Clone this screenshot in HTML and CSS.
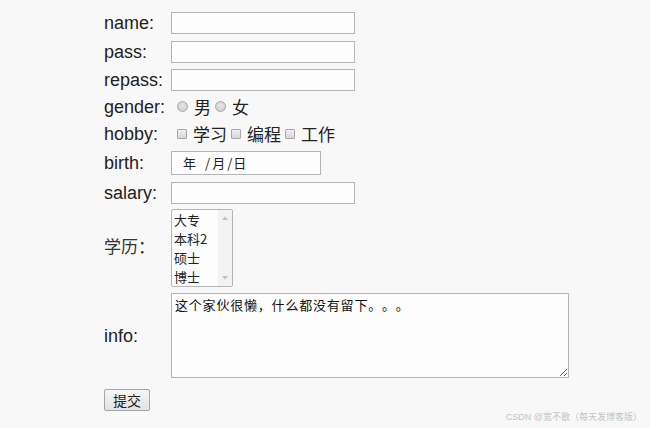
FILE: index.html
```html
<!DOCTYPE html>
<html lang="zh-CN">
<head>
  <meta charset="UTF-8">
  <meta name="viewport" content="width=device-width, initial-scale=1.0">
  <title>注册</title>
  <link rel="stylesheet" href="styles.css">
</head>
<body>
  <form class="reg-form" onsubmit="return false">
    <label class="lbl" for="name">name:</label>
    <div class="field"><input class="txt" type="text" id="name" name="name"></div>

    <label class="lbl" for="pass">pass:</label>
    <div class="field"><input class="txt" type="password" id="pass" name="pass"></div>

    <label class="lbl" for="repass">repass:</label>
    <div class="field"><input class="txt" type="password" id="repass" name="repass"></div>

    <span class="lbl">gender:</span>
    <div class="field choices">
      <label><input class="radio" type="radio" name="gender" value="m">男</label>
      <label><input class="radio" type="radio" name="gender" value="f">女</label>
    </div>

    <span class="lbl">hobby:</span>
    <div class="field choices">
      <label><input class="check" type="checkbox" name="hobby" value="study">学习</label>
      <label><input class="check" type="checkbox" name="hobby" value="code">编程</label>
      <label><input class="check" type="checkbox" name="hobby" value="work">工作</label>
    </div>

    <span class="lbl">birth:</span>
    <div class="field">
      <div class="date-box"><span class="y">年</span><span class="s1">/</span><span class="m">月</span><span class="s2">/</span><span>日</span></div>
    </div>

    <label class="lbl" for="salary">salary:</label>
    <div class="field"><input class="txt" type="text" id="salary" name="salary"></div>

    <label class="lbl lbl-cn" for="edu">学历：</label>
    <div class="field">
      <div class="edu-wrap">
        <select class="edu" id="edu" name="edu" size="4">
          <option>大专</option>
          <option>本科2</option>
          <option>硕士</option>
          <option>博士</option>
        </select>
        <!-- disabled scrollbar look -->
        <span class="edu-bar">
          <svg width="14" height="76" viewBox="0 0 14 76">
            <path d="M4 10 L7 6.5 L10 10 Z" fill="#c2c2c2"/>
            <path d="M4 66 L7 69.5 L10 66 Z" fill="#c2c2c2"/>
          </svg>
        </span>
      </div>
    </div>

    <label class="lbl" for="info">info:</label>
    <div class="field">
      <textarea class="info" id="info" name="info">这个家伙很懒，什么都没有留下。。。</textarea>
    </div>

    <div class="submit-row"><button class="submit-btn" type="submit">提交</button></div>
  </form>

  <div class="watermark">CSDN @宽不散（每天发博客版）</div>
</body>
</html>
```

FILE: styles.css
```css
body {
  margin: 0;
  padding: 8px 0 0 104px;
  min-height: 100vh;
  box-sizing: border-box;
  background-color: #f8f8f8;
  color: #222;
  font-family: "Liberation Sans", "Noto Sans CJK SC", sans-serif;
  font-size: 18px;
}

.reg-form {
  display: grid;
  grid-template-columns: 67px auto;
  grid-template-rows: 29px 29px 28px 25px 29px 29px 32px 78px 97px 32px;
  align-items: center;
  justify-content: start;
}

.lbl {
  line-height: 20px;
}

.lbl-cn {
  color: #333;
  font-size: 17px;
}

.field {
  display: flex;
  align-items: center;
}

.txt {
  width: 184px;
  height: 22px;
  box-sizing: border-box;
  margin: 0;
  padding: 1px 3px;
  border: 1px solid #b5b5b5;
  background-color: #fdfdfd;
  font-size: 14px;
}

.choices {
  gap: 4px;
  padding-left: 6px;
  font-size: 17px;
}

.choices label {
  display: flex;
  align-items: center;
}

.radio,
.check {
  appearance: none;
  -webkit-appearance: none;
  width: 11px;
  height: 11px;
  margin: 0 6px 0 0;
  border: 1px solid #a8a8a8;
  background: linear-gradient(#f0f0f0, #d6d6d6);
  box-sizing: border-box;
}

.radio {
  border-radius: 50%;
  background: radial-gradient(circle at 50% 40%, #e6e6e6, #c9c9c9);
}

.check {
  width: 10px;
  height: 10px;
  border-radius: 1px;
}

.date-box {
  display: flex;
  align-items: center;
  width: 150px;
  height: 24px;
  box-sizing: border-box;
  padding-left: 11px;
  border: 1px solid #b5b5b5;
  background-color: #fdfdfd;
  font-family: "Noto Sans CJK SC", sans-serif;
  font-size: 13px;
}

.date-box .y {
  margin-right: 9px;
}

.date-box .s1,
.date-box .m {
  margin-right: 2px;
}

.date-box .s2 {
  margin-right: 1px;
}

.edu-wrap {
  position: relative;
  width: 62px;
  height: 78px;
}

.edu {
  width: 62px;
  height: 78px;
  box-sizing: border-box;
  margin: 0;
  padding: 0 0 0 2px;
  border: 1px solid #b5b5b5;
  background-color: #fdfdfd;
  color: #222;
  font-family: "Noto Sans CJK SC", sans-serif;
  font-size: 13px;
}

.edu option {
  padding: 0;
  height: 19px;
  line-height: 19px;
}

.edu-bar {
  position: absolute;
  top: 1px;
  right: 1px;
  width: 14px;
  height: 76px;
  background-color: #f3f3f3;
}

.edu-bar svg {
  display: block;
}

.info {
  width: 398px;
  height: 85px;
  box-sizing: border-box;
  margin: 0;
  padding: 2px 3px;
  border: 1px solid #b5b5b5;
  background-color: #fdfdfd;
  color: #111;
  font-family: "Noto Sans CJK SC", sans-serif;
  font-size: 13px;
  letter-spacing: 0.8px;
  line-height: 18px;
  text-spacing-trim: space-all;
  font-feature-settings: "chws" 0, "halt" 0;
  resize: both;
}

.submit-row {
  grid-column: 1 / 3;
}

.submit-btn {
  width: 46px;
  height: 22px;
  padding: 0;
  border: 1px solid #a5a5a5;
  border-radius: 2px;
  background: linear-gradient(#f6f6f6, #e2e2e2);
  color: #222;
  font-family: "Noto Sans CJK SC", sans-serif;
  font-size: 14px;
  cursor: pointer;
}

.watermark {
  position: absolute;
  right: 8px;
  bottom: 5px;
  color: #c4c4c4;
  font-family: "Liberation Sans", "Noto Sans CJK SC", sans-serif;
  font-size: 9px;
}
```
